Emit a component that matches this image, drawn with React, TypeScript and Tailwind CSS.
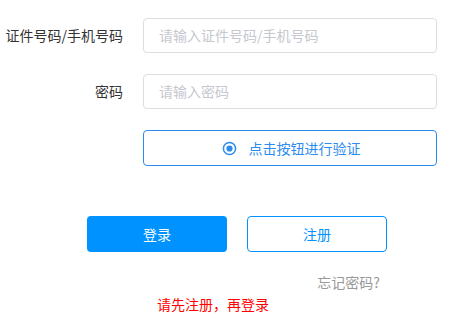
import React from "react";

const font = { fontFamily: '"Noto Sans CJK SC", "Liberation Sans", sans-serif' };

export default function App() {
  return (
    <div className="w-[461px] h-[333px] bg-white relative" style={font}>
      <div className="pt-[18px] flex flex-col gap-[21px]">
        <div className="flex items-center">
          <div className="w-[123px] text-right text-[14px] text-[#333]">证件号码/手机号码</div>
          <div className="ml-[20px] w-[294px] h-[35px] border border-[#dcdee2] rounded-[4px] flex items-center pl-[15px] text-[14px] text-[#c5c8ce]">
            请输入证件号码/手机号码
          </div>
        </div>
        <div className="flex items-center">
          <div className="w-[123px] text-right text-[14px] text-[#333]">密码</div>
          <div className="ml-[20px] w-[294px] h-[35px] border border-[#dcdee2] rounded-[4px] flex items-center pl-[15px] text-[14px] text-[#c5c8ce]">
            请输入密码
          </div>
        </div>
        <div className="flex items-center">
          <div className="w-[123px]" />
          <div className="ml-[20px] w-[294px] h-[36px] border border-[#2d8cf0] rounded-[4px] flex items-center justify-center gap-[12px] pl-[2px] text-[14px] text-[#2d8cf0]">
            <svg width="15" height="15" viewBox="0 0 16 16">
              <circle cx="8" cy="8" r="6.5" fill="none" stroke="#2d8cf0" strokeWidth="1.6" />
              <circle cx="8" cy="8" r="3.3" fill="#2d8cf0" />
            </svg>
            <span>点击按钮进行验证</span>
          </div>
        </div>
      </div>
      <div className="mt-[50px] flex pl-[87px] gap-[20px]">
        <div className="w-[140px] h-[36px] rounded-[4px] bg-[#0092ff] text-white text-[14px] flex items-center justify-center">
          登录
        </div>
        <div className="w-[140px] h-[36px] rounded-[4px] border border-[#0092ff] text-[#0092ff] text-[14px] flex items-center justify-center">
          注册
        </div>
      </div>
      <div className="mt-[20px] flex justify-end pr-[81px] text-[14px] text-[#999] leading-[20px]">
        忘记密码?
      </div>
      <div className="mt-[2px] pl-[157px] text-[14px] text-[#ff0000] leading-[20px]">
        请先注册，再登录
      </div>
    </div>
  );
}
